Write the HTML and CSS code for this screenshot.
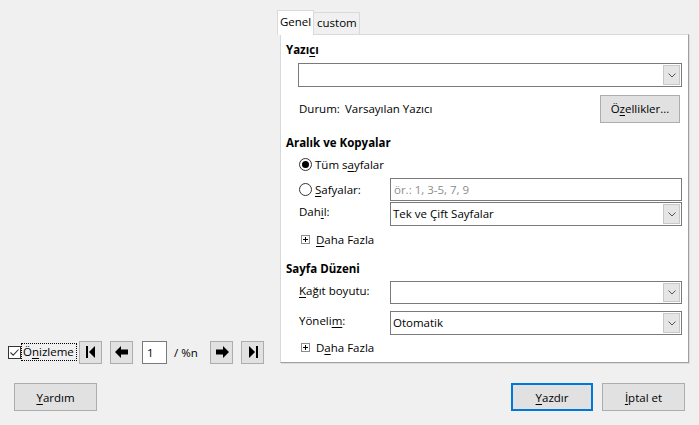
FILE: index.html
```html
<!DOCTYPE html>
<html lang="tr">
<head>
<meta charset="utf-8">
<link rel="stylesheet" href="styles.css">
</head>
<body>
<div class="top">
  <div class="left">
    <div class="preview-bar">
      <span class="chk"><svg width="11" height="11" viewBox="0 0 11 11"><path d="M1.5 5.5 L4.2 8.2 L9.5 2.5" fill="none" stroke="#333" stroke-width="1.1"/></svg></span>
      <span class="focus">Ö<u>n</u>izleme</span>
      <button class="nav n1"><svg width="10" height="12" viewBox="0 0 10 12"><rect x="0" y="0" width="2" height="12" fill="#000"/><path d="M9 0 L9 12 L3 6 Z" fill="#000"/></svg></button>
      <button class="nav n2"><svg width="14" height="12" viewBox="0 0 14 12"><path d="M0 6 L6 0 L6 3.5 L13 3.5 L13 8.5 L6 8.5 L6 12 Z" fill="#000"/></svg></button>
      <span class="page">1</span>
      <span class="of">/ %n</span>
      <button class="nav n3"><svg width="14" height="12" viewBox="0 0 14 12"><path d="M14 6 L8 0 L8 3.5 L1 3.5 L1 8.5 L8 8.5 L8 12 Z" fill="#000"/></svg></button>
      <button class="nav n4"><svg width="10" height="12" viewBox="0 0 10 12"><path d="M1 0 L1 12 L7 6 Z" fill="#000"/><rect x="8" y="0" width="2" height="12" fill="#000"/></svg></button>
    </div>
  </div>
  <div class="right">
    <div class="tabs">
      <div class="tab active">Genel</div>
      <div class="tab tab-custom">custom</div>
    </div>
    <div class="panel">
      <div class="heading h-first">Yazı<u>c</u>ı</div>
      <div class="indent select sel-printer"><span class="val"></span><span class="arrow"><svg width="8" height="5" viewBox="0 0 8 5"><path d="M0.5 0.5 L4 4 L7.5 0.5" fill="none" stroke="#555" stroke-width="1"/></svg></span></div>
      <div class="indent row durum">
        <span class="durum-lbl">Durum:</span>
        <span class="durum-val">Varsayılan Yazıcı</span>
        <button class="btn props">Ö<u>z</u>ellikler...</button>
      </div>
      <div class="heading h-range">Aralık ve Kopyalar</div>
      <div class="indent row radio-row r1">
        <span class="radio checked"><span class="dot"></span></span>
        <span>Tüm s<u>a</u>yfalar</span>
      </div>
      <div class="indent row r2">
        <span class="lbl radio-lbl"><span class="radio"></span><span><u>S</u>afyalar:</span></span>
        <span class="input placeholder">ör.: 1, 3-5, 7, 9</span>
      </div>
      <div class="indent row r3">
        <span class="lbl">Dah<u>i</u>l:</span>
        <div class="select grow"><span class="val">Tek ve Çift Sayfalar</span><span class="arrow"><svg width="8" height="5" viewBox="0 0 8 5"><path d="M0.5 0.5 L4 4 L7.5 0.5" fill="none" stroke="#555" stroke-width="1"/></svg></span></div>
      </div>
      <div class="indent row more m1"><span class="plus"></span><span><u>D</u>aha Fazla</span></div>
      <div class="heading h-page">Sayfa Düzeni</div>
      <div class="indent row r4">
        <span class="lbl"><u>K</u>ağıt boyutu:</span>
        <div class="select grow"><span class="val"></span><span class="arrow"><svg width="8" height="5" viewBox="0 0 8 5"><path d="M0.5 0.5 L4 4 L7.5 0.5" fill="none" stroke="#555" stroke-width="1"/></svg></span></div>
      </div>
      <div class="indent row r5">
        <span class="lbl">Yöneli<u>m</u>:</span>
        <div class="select grow"><span class="val">Otomatik</span><span class="arrow"><svg width="8" height="5" viewBox="0 0 8 5"><path d="M0.5 0.5 L4 4 L7.5 0.5" fill="none" stroke="#555" stroke-width="1"/></svg></span></div>
      </div>
      <div class="indent row more m2"><span class="plus"></span><span>D<u>a</u>ha Fazla</span></div>
    </div>
  </div>
</div>
<div class="footer">
  <button class="btn fbtn"><u>Y</u>ardım</button>
  <div class="fright">
    <button class="btn fbtn default"><u>Y</u>azdır</button>
    <button class="btn fbtn"><u>İ</u>ptal et</button>
  </div>
</div>
</body>
</html>
```

FILE: styles.css
```css
* { box-sizing: border-box; }
html, body { margin: 0; padding: 0; }
body {
  width: 699px;
  height: 425px;
  background: #f0f0f0;
  font-family: "Open Sans", "Noto Sans", sans-serif;
  font-size: 11.5px;
  color: #000;
  overflow: hidden;
}
u { text-decoration: underline; text-underline-offset: 2px; text-decoration-thickness: 1px; }
button { font: inherit; color: inherit; padding: 0; margin: 0; }

.top { display: flex; align-items: flex-end; height: 365px; }
.left { width: 277px; flex: none; display: flex; flex-direction: column; justify-content: flex-end; height: 100%; }
.preview-bar { display: flex; align-items: center; height: 24px; margin-bottom: 1px; padding-left: 8px; }
.chk { flex: none; width: 13px; height: 13px; border: 1px solid #333; background: #fff; display: flex; align-items: center; justify-content: center; }
.focus { flex: none; width: 56px; margin-left: 0; padding: 0 0 0 1px; height: 18px; line-height: 16px; border: 1px dotted #000; white-space: nowrap; }
.nav { flex: none; width: 23px; height: 23px; background: #e1e1e1; border: 1px solid #adadad; display: flex; align-items: center; justify-content: center; }
.n1 { margin-left: 2px; }
.n2 { margin-left: 8px; }
.page { flex: none; margin-left: 9px; width: 25px; height: 23px; background: #fff; border: 1px solid #7a7a7a; padding-left: 4px; line-height: 21px; }
.of { flex: none; margin-left: 7px; width: 29px; }
.n3 { margin-left: 7px; }
.n4 { margin-left: 8px; }

.right { padding-top: 9px; padding-bottom: 2px; }
.tabs { display: flex; height: 24px; align-items: flex-end; }
.tab { height: 22px; border: 1px solid #d9d9d9; border-bottom: none; background: #f0f0f0; line-height: 20px; }
.tab.active { width: 37px; height: 25px; margin-bottom: -1px; background: #fff; position: relative; z-index: 1; line-height: 22px; padding-left: 2px; }
.tab-custom { width: 46px; padding-left: 3px; border-left: none; }
.panel { margin-left: 3px; width: 409px; background: #fff; border: 1px solid #d9d9d9; border-right-color: #a0a0a0; border-bottom-color: #a0a0a0; box-shadow: 1px 1px 0 #dcdcdc; padding: 0 6px 5px 5px; }

.heading { font-weight: 700; height: 22px; line-height: 22px; }
.h-first { height: 28px; line-height: 29px; }
.h-range { margin-top: 11px; line-height: 20px; }
.h-page { margin-top: 9px; line-height: 21px; }
.indent { margin-left: 12px; }
.row { display: flex; align-items: center; }

.select { display: flex; height: 24px; background: #fff; border: 1px solid #7a7a7a; }
.select .val { flex: 1; line-height: 22px; padding-left: 2px; }
.select .arrow { width: 17px; margin: 1px; background: #e5e5e5; border: 1px solid #c8c8c8; display: flex; align-items: center; justify-content: center; }
.grow { flex: 1; }

.durum { margin-top: 8px; height: 27px; }
.durum-lbl { flex: none; margin-left: 1px; width: 46px; }
.durum-val { flex: 1; }
.btn { background: #e1e1e1; border: 1px solid #adadad; }
.props { flex: none; width: 80px; height: 28px; margin-right: 2px; }

.r1 { height: 19px; }
.radio { flex: none; width: 13px; height: 13px; border: 1px solid #333; border-radius: 50%; background: #fff; display: flex; align-items: center; justify-content: center; margin-left: 1px; margin-right: 3px; }
.radio .dot { width: 7px; height: 7px; border-radius: 50%; background: #000; }
.r2 { margin-top: 4px; height: 23px; }
.lbl { width: 92px; flex: none; padding-left: 1px; }
.radio-lbl { display: flex; align-items: center; padding-left: 0; }
.input { flex: 1; height: 23px; border: 1px solid #7a7a7a; background: #fff; line-height: 21px; padding-left: 3px; }
.placeholder { color: #8d8d8d; }
.r3 { margin-top: 1px; height: 24px; }
.r3 .lbl, .r5 .lbl, .r4 .lbl { line-height: 20px; align-self: flex-start; }
.more { height: 20px; margin-top: 3px; }
.m2 { margin-top: 2px; }
.plus { flex: none; width: 9px; height: 9px; border: 1px solid #8c8c8c; margin-left: 3px; margin-right: 6px; position: relative; background: #fff; }
.plus::before { content: ""; position: absolute; left: 1px; top: 3px; width: 5px; height: 1px; background: #000; }
.plus::after { content: ""; position: absolute; left: 3px; top: 1px; width: 1px; height: 5px; background: #000; }
.r4 { margin-top: 1px; height: 23px; }
.r4 .select { height: 23px; }
.r5 { margin-top: 7px; height: 24px; }

.footer { display: flex; justify-content: space-between; padding: 18px 14px 0 14px; }
.fright { display: flex; gap: 9px; }
.fbtn { width: 83px; height: 28px; }
.fbtn.default { border: 2px solid #0078d7; width: 82px; }
```
